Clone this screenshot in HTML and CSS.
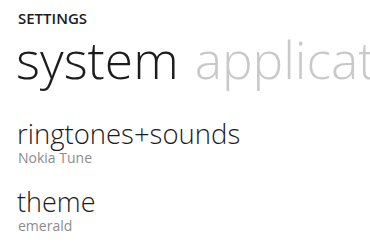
FILE: index.html
```html
<!DOCTYPE html>
<html>
<head>
<meta charset="utf-8">
<link rel="stylesheet" href="styles.css">
</head>
<body>
<div class="app">
  <div class="title">SETTINGS</div>
  <div class="pivot">
    <span class="pivot-item active">system</span>
    <span class="pivot-item">applications</span>
  </div>
  <div class="list">
    <div class="item">
      <div class="item-name">ringtones+sounds</div>
      <div class="item-sub">Nokia Tune</div>
    </div>
    <div class="item">
      <div class="item-name">theme</div>
      <div class="item-sub">emerald</div>
    </div>
  </div>
</div>
</body>
</html>
```
FILE: styles.css
```css
html, body {
  margin: 0;
  padding: 0;
  background: #ffffff;
}
.app {
  width: 370px;
  height: 242px;
  overflow: hidden;
  box-sizing: border-box;
  padding: 8px 0 0 18px;
  font-family: "Open Sans", "Noto Sans", sans-serif;
  color: #1c1c1c;
  white-space: nowrap;
}
.title {
  font-size: 15px;
  font-weight: 600;
  line-height: 20px;
}
.pivot {
  display: flex;
  gap: 16px;
  margin-top: 3px;
  margin-left: -2px;
  font-size: 51.5px;
  font-weight: 300;
  line-height: 56px;
}
.pivot-item {
  color: #c9c9c9;
}
.pivot-item.active {
  color: #1c1c1c;
}
.list {
  display: flex;
  flex-direction: column;
  gap: 20px;
  margin-top: 31px;
}
.item-name {
  font-size: 27.5px;
  font-weight: 300;
  line-height: 32px;
  margin-left: -1px;
}
.item + .item .item-name {
  font-size: 27px;
}
.item-sub {
  font-size: 14px;
  line-height: 16px;
  color: #8c8c8c;
}
```
